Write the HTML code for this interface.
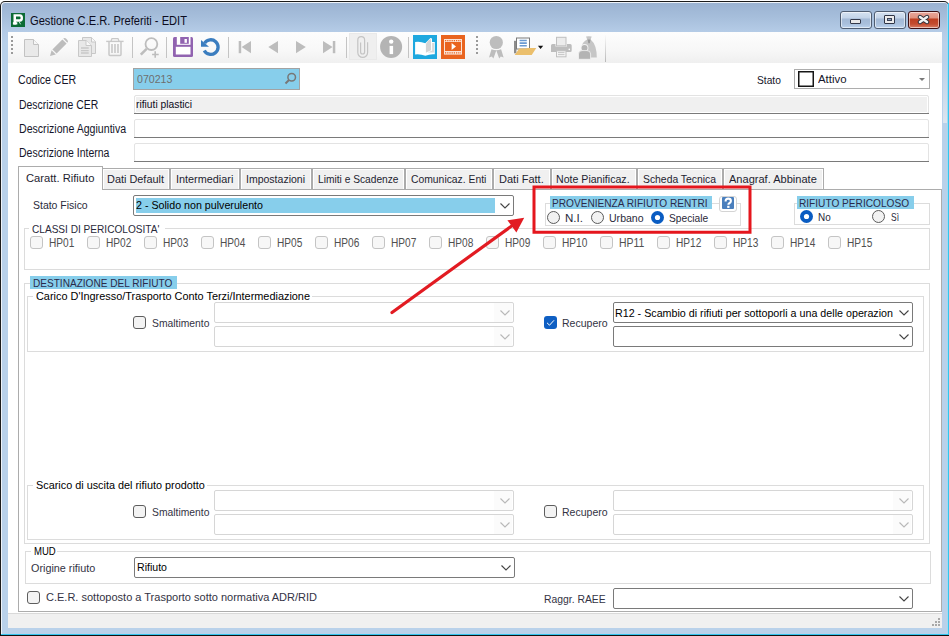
<!DOCTYPE html>
<html><head><meta charset="utf-8"><style>
html,body{margin:0;padding:0;width:949px;height:636px;overflow:hidden;background:#fff;position:relative}
</style></head><body>
<div style="position:absolute;left:0px;top:1px;width:949px;height:635px;background:#1c1c1c;border-radius:5px 5px 0 0"></div>
<div style="position:absolute;left:1px;top:2px;width:947px;height:633px;background:#eef3f9;border-radius:4px 4px 0 0"></div>
<div style="position:absolute;left:2px;top:3px;width:946px;height:631px;background:linear-gradient(#9bb3d2 0px,#a6bedb 14px,#b4cbe6 28px,#b9d1ea 40px);border-radius:3px 3px 0 0"></div>
<div style="position:absolute;left:943px;top:60px;width:4px;height:63px;background:linear-gradient(#b9d1ea,#d6e1ee 85%,#dce5f0)"></div>
<div style="position:absolute;left:947px;top:4px;width:1px;height:630px;background:#9fdcf2"></div>
<div style="position:absolute;left:948px;top:3px;width:1px;height:633px;background:#33c4ee"></div>
<div style="position:absolute;left:0px;top:634px;width:949px;height:1px;background:#33c4ee"></div>
<div style="position:absolute;left:0px;top:635px;width:949px;height:1px;background:#111"></div>
<div style="position:absolute;left:0px;top:634px;width:1px;height:2px;background:#111"></div>
<svg style="position:absolute;left:11px;top:13px" width="14" height="14" viewBox="0 0 14 14"><rect x="0" y="0" width="14" height="14" fill="#0b6b35"/><path fill-rule="evenodd" d="M2.5 1.2 H9 Q12 1.2 12 4.9 Q12 8.7 9 8.7 H5 V11.5 H2.5 Z M5 3.6 H8.6 Q9.6 3.6 9.6 4.95 Q9.6 6.3 8.6 6.3 H5 Z" fill="#fff"/><rect x="1.9" y="9.2" width="4.4" height="2.3" fill="#fff"/><path d="M8.2 8.8 L9.6 11.3" stroke="#dfe" stroke-width="0.9"/></svg>
<span id="t0" style="position:absolute;left:30px;top:11px;font-family:'Liberation Sans', sans-serif;font-size:12.5px;line-height:20px;white-space:nowrap;color:#0c0c20;transform-origin:0 0;transform:scaleX(0.8898);">Gestione C.E.R. Preferiti - EDIT</span>
<div style="position:absolute;left:840px;top:11px;width:32px;height:18px;box-sizing:border-box;border:1px solid #4f5d71;border-radius:3px;background:linear-gradient(#d5e2f1 0px,#c3d4e8 6px,#a3b9d6 7px,#a9c0dc 12px,#bcd3ee 16px);box-shadow:inset 0 0 0 1px rgba(255,255,255,0.55)"></div>
<div style="position:absolute;left:874px;top:11px;width:32px;height:18px;box-sizing:border-box;border:1px solid #4f5d71;border-radius:3px;background:linear-gradient(#d5e2f1 0px,#c3d4e8 6px,#a3b9d6 7px,#a9c0dc 12px,#bcd3ee 16px);box-shadow:inset 0 0 0 1px rgba(255,255,255,0.55)"></div>
<div style="position:absolute;left:908px;top:11px;width:32px;height:18px;box-sizing:border-box;border:1px solid #3d1014;border-radius:3px;background:linear-gradient(#eaa79c 0px,#e0927f 6px,#bd3f22 7px,#c44b2e 12px,#d77e66 16px);box-shadow:inset 0 0 0 1px rgba(255,255,255,0.55)"></div>
<div style="position:absolute;left:850px;top:19px;width:11px;height:5px;box-sizing:border-box;border:1px solid #33394a;background:#e8e8e8;border-radius:1px"></div>
<div style="position:absolute;left:884px;top:15px;width:11px;height:9px;box-sizing:border-box;border:1px solid #2f3546;background:#ececec;border-radius:1px"></div>
<div style="position:absolute;left:887px;top:18px;width:5px;height:3px;box-sizing:border-box;border:1px solid #3a4256;background:#8fa4c2"></div>
<svg style="position:absolute;left:917px;top:14px" width="13" height="11" viewBox="0 0 13 11"><path d="M3 3 L10 8 M10 3 L3 8" stroke="#2b2f3a" stroke-width="4.4" stroke-linecap="round"/><path d="M3 3 L10 8 M10 3 L3 8" stroke="#f2f2f2" stroke-width="2.6" stroke-linecap="round"/></svg>
<div style="position:absolute;left:8px;top:32px;width:934px;height:596px;background:#ffffff"></div>
<div style="position:absolute;left:8px;top:32px;width:934px;height:31px;background:linear-gradient(#fdfdfd,#f7f7f7 60%,#efefef)"></div>
<div style="position:absolute;left:8px;top:32px;width:598px;height:31px;background:linear-gradient(#fdfdfd,#f8f8f8 60%,#f0f0f0);border-radius:0 0 0 3px"></div>
<div style="position:absolute;left:605px;top:35px;width:1px;height:27px;background:linear-gradient(#fafafa,#b8b8b8)"></div>
<div style="position:absolute;left:11px;top:36px;width:2px;height:2px;background:#9a9a9a"></div>
<div style="position:absolute;left:11px;top:40px;width:2px;height:2px;background:#9a9a9a"></div>
<div style="position:absolute;left:11px;top:44px;width:2px;height:2px;background:#9a9a9a"></div>
<div style="position:absolute;left:11px;top:48px;width:2px;height:2px;background:#9a9a9a"></div>
<div style="position:absolute;left:11px;top:52px;width:2px;height:2px;background:#9a9a9a"></div>
<div style="position:absolute;left:476px;top:36px;width:2px;height:2px;background:#9a9a9a"></div>
<div style="position:absolute;left:476px;top:40px;width:2px;height:2px;background:#9a9a9a"></div>
<div style="position:absolute;left:476px;top:44px;width:2px;height:2px;background:#9a9a9a"></div>
<div style="position:absolute;left:476px;top:48px;width:2px;height:2px;background:#9a9a9a"></div>
<div style="position:absolute;left:476px;top:52px;width:2px;height:2px;background:#9a9a9a"></div>
<div style="position:absolute;left:132px;top:37px;width:1px;height:21px;background:#c4c4c4"></div>
<div style="position:absolute;left:166px;top:37px;width:1px;height:21px;background:#c4c4c4"></div>
<div style="position:absolute;left:228px;top:37px;width:1px;height:21px;background:#c4c4c4"></div>
<div style="position:absolute;left:346px;top:37px;width:1px;height:21px;background:#c4c4c4"></div>
<div style="position:absolute;left:408px;top:37px;width:1px;height:21px;background:#c4c4c4"></div>
<div style="position:absolute;left:349px;top:33px;width:28px;height:27px;box-sizing:border-box;border:1px solid #e9e9e9;background:#efefef"></div>
<svg style="position:absolute;left:0;top:0" width="949" height="70" viewBox="0 0 949 70">
<!-- new doc -->
<path d="M24.5 39.5 H33.5 L38.5 44.5 V56.5 H24.5 Z" fill="#e9e9e9" stroke="#c2c2c2" stroke-width="1"/>
<path d="M33.5 39.5 V44.5 H38.5" fill="#f6f6f6" stroke="#c2c2c2" stroke-width="1"/>
<!-- pencil -->
<g transform="translate(-0.6,0.6)"><path d="M53.0 48.8 L63.0 38.8 L67.2 43.0 L57.2 53.0 Z" fill="#bdbdbd"/>
<path d="M63.8 38.0 Q65.2 36.8 66.6 38.0 L68.0 39.4 Q69.2 40.8 68.0 42.2 Z" fill="#bdbdbd"/>
<path d="M52.2 49.6 L56.4 53.8 L50.6 55.4 Z" fill="#bdbdbd"/></g>
<!-- copy -->
<path d="M82.5 37.5 H91.5 L95.5 41.5 V53.5 H82.5 Z" fill="#e8e8e8" stroke="#c8c8c8" stroke-width="1"/>
<path d="M91.5 37.5 V42 H95.5" fill="#f8f8f8" stroke="#c8c8c8"/>
<path d="M78.5 40.5 H86 L91.5 45.5 V56.5 H78.5 Z" fill="#e8e8e8" stroke="#c8c8c8" stroke-width="1"/>
<path d="M86 40.5 V45.5 H91.5" fill="#f8f8f8" stroke="#c8c8c8"/>
<path d="M81 48 H88.7 M81 50.6 H88.7 M81 53 H88.7" stroke="#c8c8c8" stroke-width="1.4"/>
<!-- trash -->
<path d="M106.2 41.4 H123.6" stroke="#c8c8c8" stroke-width="1.4"/>
<path d="M111 41 L112 38.6 H118 L119 41" fill="none" stroke="#c8c8c8" stroke-width="1.3"/>
<path d="M109 42 V54.5 Q109 55.5 110 55.5 H120 Q121 55.5 121 54.5 V42" fill="none" stroke="#c8c8c8" stroke-width="1.5"/>
<path d="M112 44 V53 M115 44 V53 M118 44 V53" stroke="#c8c8c8" stroke-width="1.6"/>
<!-- zoom + -->
<circle cx="151.4" cy="44.1" r="5.9" fill="none" stroke="#bdbdbd" stroke-width="1.8"/>
<path d="M140.8 54.6 L146.6 48.8" stroke="#bdbdbd" stroke-width="2.6"/>
<path d="M155.2 51.2 V57.7 M152.1 54.5 H158.7" stroke="#bdbdbd" stroke-width="1.6"/>
<!-- save -->
<path d="M173 38.5 Q173 37 174.5 37 H191.5 Q193 37 193 38.5 V55.5 Q193 57 191.5 57 H174.5 Q173 57 173 55.5 Z" fill="#9163b0"/>
<rect x="176.8" y="37" width="13.7" height="7.8" fill="#fff"/>
<rect x="180.2" y="37" width="8.6" height="6.8" fill="#9163b0"/>
<rect x="184.5" y="39" width="2.4" height="3.8" fill="#fff"/>
<rect x="175.8" y="46.8" width="14.7" height="7.7" fill="#fff"/>
<!-- refresh -->
<path d="M204.6 43.2 A7.3 7.3 0 1 1 204.3 50.4" fill="none" stroke="#3b7dbf" stroke-width="3.3"/>
<path d="M201 40 L209 46.8 L201 46.8 Z" fill="#3b7dbf"/>
<!-- nav -->
<rect x="238.7" y="41" width="2.5" height="12.2" fill="#bdbdbd"/>
<path d="M251 41 V53.2 L241.6 47.1 Z" fill="#bdbdbd"/>
<path d="M278 41 V53.2 L268.3 47.1 Z" fill="#bdbdbd"/>
<path d="M296 41 V53.2 L305.8 47.1 Z" fill="#bdbdbd"/>
<path d="M323 41 V53.2 L332.6 47.1 Z" fill="#bdbdbd"/>
<rect x="332.8" y="41" width="2.5" height="12.2" fill="#bdbdbd"/>
<!-- paperclip -->
<path d="M367.6 42.3 V52.5 A4.9 4.9 0 0 1 357.8 52.5 V40.1 A3.4 3.4 0 0 1 364.6 40.1 V52 A2 2 0 0 1 360.6 52 V42.5" fill="none" stroke="#c4c4c4" stroke-width="1.2"/>
<!-- info -->
<circle cx="391.1" cy="46.9" r="11" fill="#b4b4b4"/>
<circle cx="391.2" cy="41.6" r="2.2" fill="#fff"/>
<rect x="389.6" y="45.9" width="3.5" height="8.2" fill="#fff"/>
<!-- book -->
<rect x="413" y="35" width="24" height="24" fill="#1ea8df"/>
<path d="M415.1 42 Q420.5 41.2 425.3 43.3 L430.2 38.2 Q431.6 37.6 432 39 V42 H434.8 V54.3 Q430 53.8 425.3 55.8 Q420.5 53.8 415.1 54.4 Z" fill="#fff"/>
<path d="M425.9 43.9 Q427.8 40.2 430.9 39.0 L431.1 50.2 Q428.2 51.2 425.9 52.8 Z" fill="#d4d4d4"/>
<path d="M432.1 43 H434 V52.5 H427.6 Q430 51.4 432.1 50.6 Z" fill="#dadada"/>
<!-- video -->
<rect x="441" y="35" width="24" height="24" fill="#e9641f"/>
<rect x="444" y="39" width="18" height="15.6" fill="#fbe3d6"/>
<rect x="445" y="42" width="16" height="9" fill="#e9641f"/>
<path d="M445 40.6 H461 M445 52.9 H461" stroke="#e9641f" stroke-width="1.1" stroke-dasharray="1.2 1"/>
<path d="M451.6 43.1 V50.1 L456 46.6 Z" fill="#fff"/>
<!-- award -->
<circle cx="496.3" cy="42.5" r="6.6" fill="#bdbdbd"/>
<path d="M491.5 49.2 L489 57.5 L491.8 56.6 L493.4 58.4 L496.3 50.4 L499.2 58.4 L500.8 56.6 L503.6 57.5 L501.1 49.2 Q496.3 51.2 491.5 49.2 Z" fill="#bdbdbd"/>
<!-- folder doc -->
<rect x="514" y="40.8" width="2.4" height="12.5" fill="#8c8c8c"/>
<rect x="516.5" y="38" width="13" height="11" fill="#fff" stroke="#7a7a7a" stroke-width="1"/>
<path d="M519.6 40.5 H526.8 M519.6 43.1 H526.8 M519.6 45.7 H526.8" stroke="#6a9ad2" stroke-width="1.6"/>
<path d="M514.7 54.9 L519.3 48.6 L526.5 48.6 L527.3 48 L536.3 48 L531.7 54.9 Z" fill="#ebbf6c"/>
<path d="M537.9 45.8 H543.2 L540.55 49 Z" fill="#111"/>
<!-- printer -->
<rect x="556.5" y="37.3" width="9.5" height="8.5" fill="#ececec" stroke="#c0c0c0" stroke-width="1"/>
<path d="M551 45.5 Q551 44 552.5 44 H555.5 V46.6 H567 V44 H570.2 Q571.7 44 571.7 45.5 V50.5 Q571.7 52 570.2 52 H551 Z" fill="#bdbdbd"/>
<circle cx="569.3" cy="49.4" r="0.8" fill="#fff"/>
<rect x="556.5" y="50.8" width="9.5" height="6" fill="#f6f6f6" stroke="#c0c0c0" stroke-width="1"/>
<path d="M558 52.6 H564.5 M558 54.6 H564.5" stroke="#c0c0c0" stroke-width="0.9"/>
<!-- money bag person -->
<path d="M586 36.6 Q588.8 35.8 591.7 36.6 L590.6 39.4 Q596.8 44.5 596.8 57.5 H586 L581.4 46.5 Q582.8 41.5 587.2 39.4 Z" fill="#c6c6c6"/>
<path d="M587.5 39.5 L590.5 39.5 L589.8 43.2 L588.4 43.2 Z" fill="#9a9a9a"/>
<circle cx="584.5" cy="47.9" r="3.9" fill="#f4f4f4"/>
<circle cx="584.5" cy="47.9" r="3" fill="#b4b4b4"/>
<path d="M578.5 59.3 V54 Q578.5 50.6 582 50.6 H587 Q590.6 50.6 590.6 54 V59.3 Z" fill="#b4b4b4" stroke="#f4f4f4" stroke-width="0.8"/>
</svg>
<span id="t1" style="position:absolute;left:18px;top:70px;font-family:'Liberation Sans', sans-serif;font-size:12px;line-height:20px;white-space:nowrap;color:#15152a;transform-origin:0 0;transform:scaleX(0.8814);">Codice CER</span>
<span id="t2" style="position:absolute;left:19px;top:95px;font-family:'Liberation Sans', sans-serif;font-size:12px;line-height:20px;white-space:nowrap;color:#15152a;transform-origin:0 0;transform:scaleX(0.8669);">Descrizione CER</span>
<span id="t3" style="position:absolute;left:19px;top:119px;font-family:'Liberation Sans', sans-serif;font-size:12px;line-height:20px;white-space:nowrap;color:#15152a;transform-origin:0 0;transform:scaleX(0.8822);">Descrizione Aggiuntiva</span>
<span id="t4" style="position:absolute;left:19px;top:143px;font-family:'Liberation Sans', sans-serif;font-size:12px;line-height:20px;white-space:nowrap;color:#15152a;transform-origin:0 0;transform:scaleX(0.8744);">Descrizione Interna</span>
<div style="position:absolute;left:133px;top:68px;width:167px;height:22px;box-sizing:border-box;border:1px solid #a3a3a3;background:#87ceeb;"></div>
<span id="t5" style="position:absolute;left:137px;top:69px;font-family:'Liberation Sans', sans-serif;font-size:11px;line-height:20px;white-space:nowrap;color:#6e6e6e;transform-origin:0 0;transform:scaleX(0.9641);">070213</span>
<svg style="position:absolute;left:284px;top:72px" width="13" height="13" viewBox="0 0 13 13"><circle cx="7.7" cy="5.2" r="3.8" fill="none" stroke="#777" stroke-width="1.5"/><path d="M5 8 L1.5 11.5" stroke="#777" stroke-width="2"/></svg>
<div style="position:absolute;left:134px;top:95px;width:795px;height:19px;box-sizing:border-box;border:1px solid #e3e3e3;background:#f0f0f0;border-radius:2px;box-shadow:inset 0 0 0 1px #fff"></div>
<div style="position:absolute;left:134px;top:113px;width:795px;height:1px;background:#7a7a7a"></div>
<div style="position:absolute;left:134px;top:119px;width:795px;height:19px;box-sizing:border-box;border:1px solid #e3e3e3;background:#ffffff;border-radius:2px;box-shadow:inset 0 0 0 1px #fff"></div>
<div style="position:absolute;left:134px;top:137px;width:795px;height:1px;background:#7a7a7a"></div>
<div style="position:absolute;left:134px;top:143px;width:795px;height:19px;box-sizing:border-box;border:1px solid #e3e3e3;background:#ffffff;border-radius:2px;box-shadow:inset 0 0 0 1px #fff"></div>
<div style="position:absolute;left:134px;top:161px;width:795px;height:1px;background:#7a7a7a"></div>
<span id="t6" style="position:absolute;left:135.5px;top:94px;font-family:'Liberation Sans', sans-serif;font-size:11px;line-height:20px;white-space:nowrap;color:#0c0c20;transform-origin:0 0;transform:scaleX(0.9348);">rifiuti plastici</span>
<span id="t7" style="position:absolute;left:757px;top:70px;font-family:'Liberation Sans', sans-serif;font-size:11px;line-height:20px;white-space:nowrap;color:#15152a;transform-origin:0 0;transform:scaleX(0.9265);">Stato</span>
<div style="position:absolute;left:794px;top:69px;width:136px;height:20px;box-sizing:border-box;border:1px solid #adadad;background:#fff;"></div>
<svg style="position:absolute;left:797px;top:70px" width="18" height="18" viewBox="0 0 18 18"><rect x="1.75" y="1.75" width="14.5" height="14.5" fill="#fff" stroke="#161616" stroke-width="1.5"/></svg>
<span id="t8" style="position:absolute;left:818px;top:69px;font-family:'Liberation Sans', sans-serif;font-size:11px;line-height:20px;white-space:nowrap;color:#15152a;transform-origin:0 0;transform:scaleX(1.0358);">Attivo</span>
<svg style="position:absolute;left:919px;top:78px" width="6" height="3" viewBox="0 0 6 3"><path d="M0 0 H6 L3 3Z" fill="#7a7a7a"/></svg>
<div style="position:absolute;left:18px;top:189px;width:924px;height:423px;box-sizing:border-box;border:1px solid #acacac;background:#fff;"></div>
<div style="position:absolute;left:102px;top:168px;width:68px;height:22px;box-sizing:border-box;border:1px solid #acacac;background:#f0f0f0;box-shadow:inset 1px 1px 0 #fff,inset -1px 0 0 #fff"></div>
<div style="position:absolute;left:170px;top:168px;width:70px;height:22px;box-sizing:border-box;border:1px solid #acacac;background:#f0f0f0;box-shadow:inset 1px 1px 0 #fff,inset -1px 0 0 #fff"></div>
<div style="position:absolute;left:240px;top:168px;width:72px;height:22px;box-sizing:border-box;border:1px solid #acacac;background:#f0f0f0;box-shadow:inset 1px 1px 0 #fff,inset -1px 0 0 #fff"></div>
<div style="position:absolute;left:312px;top:168px;width:93px;height:22px;box-sizing:border-box;border:1px solid #acacac;background:#f0f0f0;box-shadow:inset 1px 1px 0 #fff,inset -1px 0 0 #fff"></div>
<div style="position:absolute;left:405px;top:168px;width:88px;height:22px;box-sizing:border-box;border:1px solid #acacac;background:#f0f0f0;box-shadow:inset 1px 1px 0 #fff,inset -1px 0 0 #fff"></div>
<div style="position:absolute;left:493px;top:168px;width:58px;height:22px;box-sizing:border-box;border:1px solid #acacac;background:#f0f0f0;box-shadow:inset 1px 1px 0 #fff,inset -1px 0 0 #fff"></div>
<div style="position:absolute;left:551px;top:168px;width:86px;height:22px;box-sizing:border-box;border:1px solid #acacac;background:#f0f0f0;box-shadow:inset 1px 1px 0 #fff,inset -1px 0 0 #fff"></div>
<div style="position:absolute;left:637px;top:168px;width:86px;height:22px;box-sizing:border-box;border:1px solid #acacac;background:#f0f0f0;box-shadow:inset 1px 1px 0 #fff,inset -1px 0 0 #fff"></div>
<div style="position:absolute;left:723px;top:168px;width:101px;height:22px;box-sizing:border-box;border:1px solid #acacac;background:#f0f0f0;box-shadow:inset 1px 1px 0 #fff,inset -1px 0 0 #fff"></div>
<div style="position:absolute;left:18px;top:166px;width:85px;height:24px;box-sizing:border-box;border:1px solid #acacac;border-bottom:none;background:#fff"></div>
<span id="t9" style="position:absolute;left:25.6px;top:168px;font-family:'Liberation Sans', sans-serif;font-size:11px;line-height:20px;white-space:nowrap;color:#1e1e30;transform-origin:0 0;transform:scaleX(1.0171);">Caratt. Rifiuto</span>
<span id="t10" style="position:absolute;left:106.7px;top:169px;font-family:'Liberation Sans', sans-serif;font-size:11px;line-height:20px;white-space:nowrap;color:#1e1e30;transform-origin:0 0;transform:scaleX(0.9916);">Dati Default</span>
<span id="t11" style="position:absolute;left:175.9px;top:169px;font-family:'Liberation Sans', sans-serif;font-size:11px;line-height:20px;white-space:nowrap;color:#1e1e30;transform-origin:0 0;transform:scaleX(0.9866);">Intermediari</span>
<span id="t12" style="position:absolute;left:246px;top:169px;font-family:'Liberation Sans', sans-serif;font-size:11px;line-height:20px;white-space:nowrap;color:#1e1e30;transform-origin:0 0;transform:scaleX(0.9552);">Impostazioni</span>
<span id="t13" style="position:absolute;left:317.7px;top:169px;font-family:'Liberation Sans', sans-serif;font-size:11px;line-height:20px;white-space:nowrap;color:#1e1e30;transform-origin:0 0;transform:scaleX(0.9271);">Limiti e Scadenze</span>
<span id="t14" style="position:absolute;left:411px;top:169px;font-family:'Liberation Sans', sans-serif;font-size:11px;line-height:20px;white-space:nowrap;color:#1e1e30;transform-origin:0 0;transform:scaleX(0.9414);">Comunicaz. Enti</span>
<span id="t15" style="position:absolute;left:498.6px;top:169px;font-family:'Liberation Sans', sans-serif;font-size:11px;line-height:20px;white-space:nowrap;color:#1e1e30;transform-origin:0 0;transform:scaleX(1.0017);">Dati Fatt.</span>
<span id="t16" style="position:absolute;left:556.4px;top:169px;font-family:'Liberation Sans', sans-serif;font-size:11px;line-height:20px;white-space:nowrap;color:#1e1e30;transform-origin:0 0;transform:scaleX(0.9629);">Note Pianificaz.</span>
<span id="t17" style="position:absolute;left:642.6px;top:169px;font-family:'Liberation Sans', sans-serif;font-size:11px;line-height:20px;white-space:nowrap;color:#1e1e30;transform-origin:0 0;transform:scaleX(0.9423);">Scheda Tecnica</span>
<span id="t18" style="position:absolute;left:729.1px;top:169px;font-family:'Liberation Sans', sans-serif;font-size:11px;line-height:20px;white-space:nowrap;color:#1e1e30;transform-origin:0 0;transform:scaleX(1.0038);">Anagraf. Abbinate</span>
<span id="t19" style="position:absolute;left:32.5px;top:195px;font-family:'Liberation Sans', sans-serif;font-size:11px;line-height:20px;white-space:nowrap;color:#2a2a3a;transform-origin:0 0;transform:scaleX(0.9518);">Stato Fisico</span>
<div style="position:absolute;left:133px;top:195px;width:381px;height:21px;box-sizing:border-box;border:1px solid #7a7a7a;background:#fff;border-radius:2px;"></div>
<div style="position:absolute;left:136px;top:198px;width:359px;height:15px;background:#87ceeb"></div>
<span id="t20" style="position:absolute;left:136px;top:195px;font-family:'Liberation Sans', sans-serif;font-size:11px;line-height:20px;white-space:nowrap;color:#000;transform-origin:0 0;transform:scaleX(0.9704);">2 - Solido non pulverulento</span>
<svg style="position:absolute;left:500px;top:203px" width="10" height="6" viewBox="0 0 10 6"><path d="M0.5 0.5 L5 5 L9.5 0.5" fill="none" stroke="#444" stroke-width="1.1"/></svg>
<div style="position:absolute;left:24px;top:228px;width:906px;height:42px;box-sizing:border-box;border:1px solid #dcdcdc;"></div>
<div style="position:absolute;left:29px;top:222px;width:136px;height:10px;background:#fff"></div>
<span id="t21" style="position:absolute;left:31.9px;top:219px;font-family:'Liberation Sans', sans-serif;font-size:11px;line-height:20px;white-space:nowrap;color:#2a2a3a;transform-origin:0 0;transform:scaleX(0.9177);">CLASSI DI PERICOLOSITA'</span>
<div style="position:absolute;left:30px;top:236px;width:13px;height:13px;box-sizing:border-box;border:1px solid #c4c4c4;background:#f7f7f7;border-radius:3px;"></div>
<span id="t22" style="position:absolute;left:49.2px;top:233px;font-family:'Liberation Sans', sans-serif;font-size:12px;line-height:20px;white-space:nowrap;color:#505050;transform-origin:0 0;transform:scaleX(0.8425);">HP01</span>
<div style="position:absolute;left:87px;top:236px;width:13px;height:13px;box-sizing:border-box;border:1px solid #c4c4c4;background:#f7f7f7;border-radius:3px;"></div>
<span id="t23" style="position:absolute;left:106.2px;top:233px;font-family:'Liberation Sans', sans-serif;font-size:12px;line-height:20px;white-space:nowrap;color:#505050;transform-origin:0 0;transform:scaleX(0.8425);">HP02</span>
<div style="position:absolute;left:144px;top:236px;width:13px;height:13px;box-sizing:border-box;border:1px solid #c4c4c4;background:#f7f7f7;border-radius:3px;"></div>
<span id="t24" style="position:absolute;left:163.2px;top:233px;font-family:'Liberation Sans', sans-serif;font-size:12px;line-height:20px;white-space:nowrap;color:#505050;transform-origin:0 0;transform:scaleX(0.8425);">HP03</span>
<div style="position:absolute;left:201px;top:236px;width:13px;height:13px;box-sizing:border-box;border:1px solid #c4c4c4;background:#f7f7f7;border-radius:3px;"></div>
<span id="t25" style="position:absolute;left:220.2px;top:233px;font-family:'Liberation Sans', sans-serif;font-size:12px;line-height:20px;white-space:nowrap;color:#505050;transform-origin:0 0;transform:scaleX(0.8425);">HP04</span>
<div style="position:absolute;left:258px;top:236px;width:13px;height:13px;box-sizing:border-box;border:1px solid #c4c4c4;background:#f7f7f7;border-radius:3px;"></div>
<span id="t26" style="position:absolute;left:277.2px;top:233px;font-family:'Liberation Sans', sans-serif;font-size:12px;line-height:20px;white-space:nowrap;color:#505050;transform-origin:0 0;transform:scaleX(0.8425);">HP05</span>
<div style="position:absolute;left:315px;top:236px;width:13px;height:13px;box-sizing:border-box;border:1px solid #c4c4c4;background:#f7f7f7;border-radius:3px;"></div>
<span id="t27" style="position:absolute;left:334.2px;top:233px;font-family:'Liberation Sans', sans-serif;font-size:12px;line-height:20px;white-space:nowrap;color:#505050;transform-origin:0 0;transform:scaleX(0.8425);">HP06</span>
<div style="position:absolute;left:372px;top:236px;width:13px;height:13px;box-sizing:border-box;border:1px solid #c4c4c4;background:#f7f7f7;border-radius:3px;"></div>
<span id="t28" style="position:absolute;left:391.2px;top:233px;font-family:'Liberation Sans', sans-serif;font-size:12px;line-height:20px;white-space:nowrap;color:#505050;transform-origin:0 0;transform:scaleX(0.8425);">HP07</span>
<div style="position:absolute;left:429px;top:236px;width:13px;height:13px;box-sizing:border-box;border:1px solid #c4c4c4;background:#f7f7f7;border-radius:3px;"></div>
<span id="t29" style="position:absolute;left:448.2px;top:233px;font-family:'Liberation Sans', sans-serif;font-size:12px;line-height:20px;white-space:nowrap;color:#505050;transform-origin:0 0;transform:scaleX(0.8425);">HP08</span>
<div style="position:absolute;left:486px;top:236px;width:13px;height:13px;box-sizing:border-box;border:1px solid #c4c4c4;background:#f7f7f7;border-radius:3px;"></div>
<span id="t30" style="position:absolute;left:505.2px;top:233px;font-family:'Liberation Sans', sans-serif;font-size:12px;line-height:20px;white-space:nowrap;color:#505050;transform-origin:0 0;transform:scaleX(0.8425);">HP09</span>
<div style="position:absolute;left:543px;top:236px;width:13px;height:13px;box-sizing:border-box;border:1px solid #c4c4c4;background:#f7f7f7;border-radius:3px;"></div>
<span id="t31" style="position:absolute;left:562.2px;top:233px;font-family:'Liberation Sans', sans-serif;font-size:12px;line-height:20px;white-space:nowrap;color:#505050;transform-origin:0 0;transform:scaleX(0.8425);">HP10</span>
<div style="position:absolute;left:600px;top:236px;width:13px;height:13px;box-sizing:border-box;border:1px solid #c4c4c4;background:#f7f7f7;border-radius:3px;"></div>
<span id="t32" style="position:absolute;left:619.2px;top:233px;font-family:'Liberation Sans', sans-serif;font-size:12px;line-height:20px;white-space:nowrap;color:#505050;transform-origin:0 0;transform:scaleX(0.8682);">HP11</span>
<div style="position:absolute;left:657px;top:236px;width:13px;height:13px;box-sizing:border-box;border:1px solid #c4c4c4;background:#f7f7f7;border-radius:3px;"></div>
<span id="t33" style="position:absolute;left:676.2px;top:233px;font-family:'Liberation Sans', sans-serif;font-size:12px;line-height:20px;white-space:nowrap;color:#505050;transform-origin:0 0;transform:scaleX(0.8425);">HP12</span>
<div style="position:absolute;left:714px;top:236px;width:13px;height:13px;box-sizing:border-box;border:1px solid #c4c4c4;background:#f7f7f7;border-radius:3px;"></div>
<span id="t34" style="position:absolute;left:733.2px;top:233px;font-family:'Liberation Sans', sans-serif;font-size:12px;line-height:20px;white-space:nowrap;color:#505050;transform-origin:0 0;transform:scaleX(0.8425);">HP13</span>
<div style="position:absolute;left:771px;top:236px;width:13px;height:13px;box-sizing:border-box;border:1px solid #c4c4c4;background:#f7f7f7;border-radius:3px;"></div>
<span id="t35" style="position:absolute;left:790.2px;top:233px;font-family:'Liberation Sans', sans-serif;font-size:12px;line-height:20px;white-space:nowrap;color:#505050;transform-origin:0 0;transform:scaleX(0.8425);">HP14</span>
<div style="position:absolute;left:828px;top:236px;width:13px;height:13px;box-sizing:border-box;border:1px solid #c4c4c4;background:#f7f7f7;border-radius:3px;"></div>
<span id="t36" style="position:absolute;left:847.2px;top:233px;font-family:'Liberation Sans', sans-serif;font-size:12px;line-height:20px;white-space:nowrap;color:#505050;transform-origin:0 0;transform:scaleX(0.8425);">HP15</span>
<div style="position:absolute;left:545px;top:203px;width:196px;height:23px;box-sizing:border-box;border:1px solid #dcdcdc;"></div>
<div style="position:absolute;left:550px;top:196px;width:162px;height:13px;background:#87ceeb"></div>
<span id="t37" style="position:absolute;left:552.4px;top:193px;font-family:'Liberation Sans', sans-serif;font-size:11px;line-height:20px;white-space:nowrap;color:#2a2a4a;transform-origin:0 0;transform:scaleX(0.9202);">PROVENIENZA RIFIUTO RENTRI</span>
<div style="position:absolute;left:719px;top:196px;width:18px;height:16px;box-sizing:border-box;border:1px solid #d4d4d4;border-radius:3px;background:#fff"></div>
<div style="position:absolute;left:722px;top:197px;width:12px;height:12px;background:#4a7fbd;border-radius:1px"></div>
<svg style="position:absolute;left:722px;top:197px" width="12" height="12" viewBox="0 0 12 12"><path d="M3.6 4.4 Q3.6 1.6 6.2 1.6 Q8.9 1.6 8.9 4 Q8.9 5.4 7.4 6.2 Q6.4 6.8 6.4 7.8" fill="none" stroke="#fff" stroke-width="2.1"/><rect x="5.2" y="8.8" width="2.3" height="2.1" fill="#fff"/></svg>
<svg style="position:absolute;left:547px;top:211px" width="13" height="13" viewBox="0 0 13 13"><circle cx="6.5" cy="6.5" r="6" fill="#f2f2f2" stroke="#5a5a5a" stroke-width="1"/></svg>
<svg style="position:absolute;left:591px;top:211px" width="13" height="13" viewBox="0 0 13 13"><circle cx="6.5" cy="6.5" r="6" fill="#f2f2f2" stroke="#5a5a5a" stroke-width="1"/></svg>
<svg style="position:absolute;left:651px;top:211px" width="13" height="13" viewBox="0 0 13 13"><circle cx="6.5" cy="6.5" r="6.5" fill="#0a5cc2"/><circle cx="6.5" cy="6.5" r="2.6" fill="#fff"/></svg>
<span id="t38" style="position:absolute;left:565.3px;top:208px;font-family:'Liberation Sans', sans-serif;font-size:11px;line-height:20px;white-space:nowrap;color:#2a2a3a;transform-origin:0 0;transform:scaleX(1.0511);">N.I.</span>
<span id="t39" style="position:absolute;left:609.3px;top:208px;font-family:'Liberation Sans', sans-serif;font-size:11px;line-height:20px;white-space:nowrap;color:#2a2a3a;transform-origin:0 0;transform:scaleX(0.9590);">Urbano</span>
<span id="t40" style="position:absolute;left:669.2px;top:208px;font-family:'Liberation Sans', sans-serif;font-size:11px;line-height:20px;white-space:nowrap;color:#2a2a3a;transform-origin:0 0;transform:scaleX(0.9288);">Speciale</span>
<div style="position:absolute;left:794px;top:203px;width:136px;height:22px;box-sizing:border-box;border:1px solid #dcdcdc;"></div>
<div style="position:absolute;left:797px;top:196px;width:117px;height:13px;background:#87ceeb"></div>
<span id="t41" style="position:absolute;left:799.2px;top:193px;font-family:'Liberation Sans', sans-serif;font-size:11px;line-height:20px;white-space:nowrap;color:#2a2a4a;transform-origin:0 0;transform:scaleX(0.9198);">RIFIUTO PERICOLOSO</span>
<svg style="position:absolute;left:800px;top:210px" width="13" height="13" viewBox="0 0 13 13"><circle cx="6.5" cy="6.5" r="6.5" fill="#0a5cc2"/><circle cx="6.5" cy="6.5" r="2.6" fill="#fff"/></svg>
<svg style="position:absolute;left:872px;top:210px" width="13" height="13" viewBox="0 0 13 13"><circle cx="6.5" cy="6.5" r="6" fill="#f2f2f2" stroke="#5a5a5a" stroke-width="1"/></svg>
<span id="t42" style="position:absolute;left:818px;top:207px;font-family:'Liberation Sans', sans-serif;font-size:11px;line-height:20px;white-space:nowrap;color:#2a2a3a;transform-origin:0 0;transform:scaleX(0.9031);">No</span>
<span id="t43" style="position:absolute;left:890.5px;top:207px;font-family:'Liberation Sans', sans-serif;font-size:11px;line-height:20px;white-space:nowrap;color:#2a2a3a;transform-origin:0 0;transform:scaleX(0.7688);">Sì</span>
<div style="position:absolute;left:24px;top:283px;width:906px;height:261px;box-sizing:border-box;border:1px solid #dcdcdc;"></div>
<div style="position:absolute;left:30px;top:276px;width:147px;height:13px;background:#87ceeb"></div>
<span id="t44" style="position:absolute;left:32.5px;top:273px;font-family:'Liberation Sans', sans-serif;font-size:11px;line-height:20px;white-space:nowrap;color:#2a2a4a;transform-origin:0 0;transform:scaleX(0.9153);">DESTINAZIONE DEL RIFIUTO</span>
<div style="position:absolute;left:27px;top:296px;width:897px;height:56px;box-sizing:border-box;border:1px solid #dcdcdc;"></div>
<div style="position:absolute;left:33px;top:290px;width:279px;height:10px;background:#fff"></div>
<span id="t45" style="position:absolute;left:35.5px;top:286px;font-family:'Liberation Sans', sans-serif;font-size:11px;line-height:20px;white-space:nowrap;color:#000;transform-origin:0 0;transform:scaleX(0.9905);">Carico D'Ingresso/Trasporto Conto Terzi/Intermediazione</span>
<div style="position:absolute;left:133px;top:316px;width:13px;height:13px;box-sizing:border-box;border:1px solid #5d5d5d;background:#f3f3f3;border-radius:3px;"></div>
<span id="t46" style="position:absolute;left:151.6px;top:313px;font-family:'Liberation Sans', sans-serif;font-size:11px;line-height:20px;white-space:nowrap;color:#333344;transform-origin:0 0;transform:scaleX(0.9388);">Smaltimento</span>
<div style="position:absolute;left:214px;top:302px;width:300px;height:21px;box-sizing:border-box;border:1px solid #d6d6d6;background:#fff;border-radius:2px;"></div>
<div style="position:absolute;left:494px;top:303px;width:18px;height:19px;background:#fbfbfb"></div>
<svg style="position:absolute;left:500px;top:310px" width="10" height="6" viewBox="0 0 10 6"><path d="M0.5 0.5 L5 5 L9.5 0.5" fill="none" stroke="#b8b8b8" stroke-width="1.1"/></svg>
<div style="position:absolute;left:214px;top:326px;width:300px;height:21px;box-sizing:border-box;border:1px solid #d6d6d6;background:#fff;border-radius:2px;"></div>
<div style="position:absolute;left:494px;top:327px;width:18px;height:19px;background:#fbfbfb"></div>
<svg style="position:absolute;left:500px;top:334px" width="10" height="6" viewBox="0 0 10 6"><path d="M0.5 0.5 L5 5 L9.5 0.5" fill="none" stroke="#b8b8b8" stroke-width="1.1"/></svg>
<div style="position:absolute;left:544px;top:316px;width:13px;height:13px;background:#0f5fc3;border-radius:3px"></div>
<svg style="position:absolute;left:544px;top:316px" width="13" height="13" viewBox="0 0 13 13"><path d="M3 6.8 L5.5 9.2 L10 4.3" fill="none" stroke="#fff" stroke-width="1"/></svg>
<span id="t47" style="position:absolute;left:562.3px;top:313px;font-family:'Liberation Sans', sans-serif;font-size:11px;line-height:20px;white-space:nowrap;color:#333344;transform-origin:0 0;transform:scaleX(0.9580);">Recupero</span>
<div style="position:absolute;left:613px;top:302px;width:300px;height:21px;box-sizing:border-box;border:1px solid #7a7a7a;background:#fff;border-radius:2px;"></div>
<svg style="position:absolute;left:899px;top:310px" width="10" height="6" viewBox="0 0 10 6"><path d="M0.5 0.5 L5 5 L9.5 0.5" fill="none" stroke="#444" stroke-width="1.1"/></svg>
<span id="t48" style="position:absolute;left:615px;top:303px;font-family:'Liberation Sans', sans-serif;font-size:11px;line-height:20px;white-space:nowrap;color:#000;transform-origin:0 0;transform:scaleX(0.9736);">R12 - Scambio di rifiuti per sottoporli a una delle operazion</span>
<div style="position:absolute;left:613px;top:326px;width:300px;height:21px;box-sizing:border-box;border:1px solid #7a7a7a;background:#fff;border-radius:2px;"></div>
<svg style="position:absolute;left:899px;top:334px" width="10" height="6" viewBox="0 0 10 6"><path d="M0.5 0.5 L5 5 L9.5 0.5" fill="none" stroke="#444" stroke-width="1.1"/></svg>
<div style="position:absolute;left:27px;top:485px;width:897px;height:55px;box-sizing:border-box;border:1px solid #dcdcdc;"></div>
<div style="position:absolute;left:33px;top:479px;width:173.8px;height:10px;background:#fff"></div>
<span id="t49" style="position:absolute;left:35.5px;top:475px;font-family:'Liberation Sans', sans-serif;font-size:11px;line-height:20px;white-space:nowrap;color:#000;transform-origin:0 0;transform:scaleX(0.9860);">Scarico di uscita del rifiuto prodotto</span>
<div style="position:absolute;left:133px;top:505px;width:13px;height:13px;box-sizing:border-box;border:1px solid #5d5d5d;background:#f3f3f3;border-radius:3px;"></div>
<span id="t50" style="position:absolute;left:151.6px;top:502px;font-family:'Liberation Sans', sans-serif;font-size:11px;line-height:20px;white-space:nowrap;color:#333344;transform-origin:0 0;transform:scaleX(0.9388);">Smaltimento</span>
<div style="position:absolute;left:214px;top:490px;width:300px;height:21px;box-sizing:border-box;border:1px solid #d6d6d6;background:#fff;border-radius:2px;"></div>
<div style="position:absolute;left:494px;top:491px;width:18px;height:19px;background:#fbfbfb"></div>
<svg style="position:absolute;left:500px;top:498px" width="10" height="6" viewBox="0 0 10 6"><path d="M0.5 0.5 L5 5 L9.5 0.5" fill="none" stroke="#b8b8b8" stroke-width="1.1"/></svg>
<div style="position:absolute;left:214px;top:514px;width:300px;height:21px;box-sizing:border-box;border:1px solid #d6d6d6;background:#fff;border-radius:2px;"></div>
<div style="position:absolute;left:494px;top:515px;width:18px;height:19px;background:#fbfbfb"></div>
<svg style="position:absolute;left:500px;top:522px" width="10" height="6" viewBox="0 0 10 6"><path d="M0.5 0.5 L5 5 L9.5 0.5" fill="none" stroke="#b8b8b8" stroke-width="1.1"/></svg>
<div style="position:absolute;left:544px;top:505px;width:13px;height:13px;box-sizing:border-box;border:1px solid #5d5d5d;background:#f3f3f3;border-radius:3px;"></div>
<span id="t51" style="position:absolute;left:562.3px;top:502px;font-family:'Liberation Sans', sans-serif;font-size:11px;line-height:20px;white-space:nowrap;color:#333344;transform-origin:0 0;transform:scaleX(0.9580);">Recupero</span>
<div style="position:absolute;left:613px;top:490px;width:300px;height:21px;box-sizing:border-box;border:1px solid #d6d6d6;background:#fff;border-radius:2px;"></div>
<div style="position:absolute;left:893px;top:491px;width:18px;height:19px;background:#fbfbfb"></div>
<svg style="position:absolute;left:899px;top:498px" width="10" height="6" viewBox="0 0 10 6"><path d="M0.5 0.5 L5 5 L9.5 0.5" fill="none" stroke="#b8b8b8" stroke-width="1.1"/></svg>
<div style="position:absolute;left:613px;top:514px;width:300px;height:21px;box-sizing:border-box;border:1px solid #d6d6d6;background:#fff;border-radius:2px;"></div>
<div style="position:absolute;left:893px;top:515px;width:18px;height:19px;background:#fbfbfb"></div>
<svg style="position:absolute;left:899px;top:522px" width="10" height="6" viewBox="0 0 10 6"><path d="M0.5 0.5 L5 5 L9.5 0.5" fill="none" stroke="#b8b8b8" stroke-width="1.1"/></svg>
<div style="position:absolute;left:25px;top:551px;width:906px;height:33px;box-sizing:border-box;border:1px solid #dcdcdc;"></div>
<div style="position:absolute;left:31px;top:545px;width:26px;height:10px;background:#fff"></div>
<span id="t52" style="position:absolute;left:33.5px;top:541px;font-family:'Liberation Sans', sans-serif;font-size:11px;line-height:20px;white-space:nowrap;color:#000;transform-origin:0 0;transform:scaleX(0.8658);">MUD</span>
<span id="t53" style="position:absolute;left:30.6px;top:558px;font-family:'Liberation Sans', sans-serif;font-size:11px;line-height:20px;white-space:nowrap;color:#333344;transform-origin:0 0;transform:scaleX(0.9829);">Origine rifiuto</span>
<div style="position:absolute;left:134px;top:557px;width:381px;height:21px;box-sizing:border-box;border:1px solid #7a7a7a;background:#fff;border-radius:2px;"></div>
<svg style="position:absolute;left:501px;top:565px" width="10" height="6" viewBox="0 0 10 6"><path d="M0.5 0.5 L5 5 L9.5 0.5" fill="none" stroke="#444" stroke-width="1.1"/></svg>
<span id="t54" style="position:absolute;left:136.5px;top:557px;font-family:'Liberation Sans', sans-serif;font-size:11px;line-height:20px;white-space:nowrap;color:#000;transform-origin:0 0;transform:scaleX(0.9619);">Rifiuto</span>
<div style="position:absolute;left:27px;top:591px;width:13px;height:13px;box-sizing:border-box;border:1px solid #5d5d5d;background:#f3f3f3;border-radius:3px;"></div>
<span id="t55" style="position:absolute;left:45.6px;top:587px;font-family:'Liberation Sans', sans-serif;font-size:11px;line-height:20px;white-space:nowrap;color:#333344;transform-origin:0 0;transform:scaleX(1.0006);">C.E.R. sottoposto a Trasporto sotto normativa ADR/RID</span>
<span id="t56" style="position:absolute;left:544.4px;top:589px;font-family:'Liberation Sans', sans-serif;font-size:11px;line-height:20px;white-space:nowrap;color:#333344;transform-origin:0 0;transform:scaleX(0.9431);">Raggr. RAEE</span>
<div style="position:absolute;left:613px;top:588px;width:300px;height:21px;box-sizing:border-box;border:1px solid #7a7a7a;background:#fff;border-radius:2px;"></div>
<svg style="position:absolute;left:899px;top:596px" width="10" height="6" viewBox="0 0 10 6"><path d="M0.5 0.5 L5 5 L9.5 0.5" fill="none" stroke="#444" stroke-width="1.1"/></svg>
<svg style="position:absolute;left:0px;top:0px" width="949" height="636" viewBox="0 0 949 636"><rect x="534" y="187" width="216" height="45.25" fill="none" stroke="#e5161d" stroke-width="3"/></svg>
<svg style="position:absolute;left:380px;top:205px" width="150" height="115" viewBox="0 0 150 115"><path d="M12 107.5 L133 20" stroke="#e21b22" stroke-width="3.2" stroke-linecap="round"/><path d="M144.2 12.7 L127.4 15.3 L136.4 27.6Z" fill="#e21b22"/></svg>
<div style="position:absolute;left:8px;top:613px;width:934px;height:1px;background:#d9d9d9"></div>
<div style="position:absolute;left:8px;top:614px;width:934px;height:14px;background:#f0f0f0"></div>
<div style="position:absolute;left:938px;top:618px;width:2px;height:2px;background:#a8a8a8"></div>
<div style="position:absolute;left:935px;top:621px;width:2px;height:2px;background:#a8a8a8"></div>
<div style="position:absolute;left:938px;top:621px;width:2px;height:2px;background:#a8a8a8"></div>
<div style="position:absolute;left:932px;top:624px;width:2px;height:2px;background:#a8a8a8"></div>
<div style="position:absolute;left:935px;top:624px;width:2px;height:2px;background:#a8a8a8"></div>
<div style="position:absolute;left:938px;top:624px;width:2px;height:2px;background:#a8a8a8"></div>

</body></html>
